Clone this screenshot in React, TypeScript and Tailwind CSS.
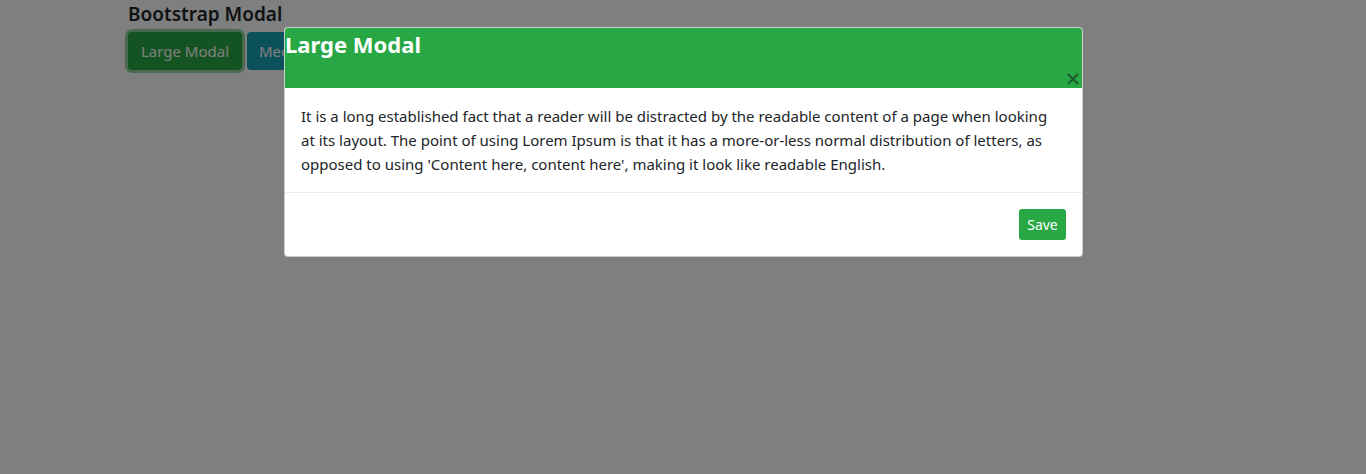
export default function App() {
  return (
    <div className="relative h-[474px] w-[1366px] overflow-hidden bg-white font-['Noto_Sans',sans-serif] text-[#212529]">
      {/* Page */}
      <div className="px-[128px] pt-[1px]">
        <h5 className="text-[19px] font-semibold leading-[24px] mt-[1px] mb-[6px]">Bootstrap Modal</h5>
        <div className="flex gap-[5px]">
          <button className="h-[38px] w-[114px] rounded-[4px] bg-[#28a745] text-[15px] text-white ring-[3px] ring-[#28a745]/50">
            Large Modal
          </button>
          <button className="h-[38px] rounded-[4px] bg-[#17a2b8] px-[12px] text-[15px] text-white">
            Medium Modal
          </button>
          <button className="h-[38px] rounded-[4px] bg-[#ffc107] px-[12px] text-[15px] text-[#212529]">
            Small Modal
          </button>
        </div>
      </div>

      {/* Backdrop */}
      <div className="absolute inset-0 bg-black/50" />

      {/* Modal */}
      <div className="absolute left-[284px] top-[27px] w-[799px] overflow-hidden rounded-[4px] border border-black/20 bg-white">
        <div className="relative h-[60px] bg-[#28a745]">
          <h4 className="text-[22px] font-bold leading-[32px] text-white">Large Modal</h4>
          <button className="absolute right-[2px] bottom-[2px] text-[#1b5a2c]">
            <svg width="14" height="14" viewBox="0 0 14 14" fill="none" stroke="currentColor" strokeWidth="1.8">
              <path d="M2 2 L12 12 M12 2 L2 12" />
            </svg>
          </button>
        </div>
        <div className="p-[16px] text-[15px] leading-[24px]">
          <span className="block">It is a long established fact that a reader will be distracted by the readable content of a page when looking</span>
          <span className="block">at its layout. The point of using Lorem Ipsum is that it has a more-or-less normal distribution of letters, as</span>
          <span className="block">opposed to using 'Content here, content here', making it look like readable English.</span>
        </div>
        <div className="flex justify-end border-t border-[#e9ecef] p-[16px]">
          <button className="h-[31px] w-[47px] rounded-[3px] bg-[#28a745] text-[14px] text-white">Save</button>
        </div>
      </div>
    </div>
  );
}
